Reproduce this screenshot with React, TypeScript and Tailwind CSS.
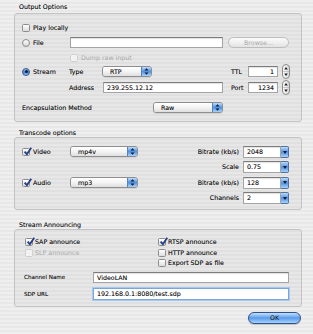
import React from 'react';

const txt = "text-[6.3px] leading-[8px] text-[#111] whitespace-nowrap [text-shadow:0_0_0.4px_rgba(0,0,0,0.45)]";

function Check({ checked, disabled }: { checked?: boolean; disabled?: boolean }) {
  return (
    <span
      className={`relative w-[8px] h-[8px] shrink-0 rounded-[1.5px] border ${
        disabled
          ? 'border-[#cfcfcf] bg-[#f2f2f2]'
          : 'border-[#8c8c8c] bg-gradient-to-b from-white to-[#dcdcdc]'
      }`}
    >
      {checked && (
        <svg className="absolute left-[0px] top-[-2px] w-[9px] h-[9px]" viewBox="0 0 10 10">
          <path d="M1.8 5.2 L4.3 8 L9.2 0.8" stroke="#243f8a" strokeWidth="2.1" fill="none" strokeLinejoin="round" />
        </svg>
      )}
    </span>
  );
}

function Radio({ on }: { on?: boolean }) {
  return on ? (
    <span className="w-[8px] h-[8px] shrink-0 rounded-full border border-[#35558f] bg-gradient-to-b from-[#9cc6f2] via-[#3e82db] to-[#8cc0f2] flex items-center justify-center">
      <span className="w-[3px] h-[3px] rounded-full bg-[#111a2e]" />
    </span>
  ) : (
    <span className="w-[8px] h-[8px] shrink-0 rounded-full border border-[#8c8c8c] bg-gradient-to-b from-white to-[#d8d8d8]" />
  );
}

function Field({ value, w, right, focus }: { value?: string; w: string; right?: boolean; focus?: boolean }) {
  return (
    <div
      className={`${w} h-full bg-white border ${
        focus
          ? 'border-[#7aa6dc] shadow-[0_0_0_1px_#a9c8ee]'
          : 'border-[#a4a4a4] border-t-[#7c7c7c] shadow-[inset_0_1px_1px_rgba(0,0,0,0.12)]'
      } flex items-center ${right ? 'justify-end pr-[3px]' : 'pl-[3px]'} ${txt}`}
    >
      {value}
    </div>
  );
}

function Arrows() {
  return (
    <svg width="5" height="7" viewBox="0 0 5 7">
      <path d="M2.5 0.3 L4.6 2.6 L0.4 2.6 Z" fill="#111a30" />
      <path d="M2.5 6.7 L4.6 4.4 L0.4 4.4 Z" fill="#111a30" />
    </svg>
  );
}

function Popup({ value, w }: { value: string; w: string }) {
  return (
    <div className={`${w} h-[11px] flex rounded-[3px] border border-[#8e8e8e] overflow-hidden shadow-[0_1px_0_rgba(0,0,0,0.08)]`}>
      <div className={`flex-1 bg-gradient-to-b from-white via-[#f4f4f4] to-[#dedede] pl-[7px] flex items-center ${txt}`}>
        {value}
      </div>
      <div className="w-[10px] border-l border-[#5b7fb8] bg-gradient-to-b from-[#b9dbfb] via-[#4f93e4] to-[#a5d2fb] flex items-center justify-center">
        <Arrows />
      </div>
    </div>
  );
}

function Combo({ value }: { value: string }) {
  return (
    <div className="w-[46px] h-[12px] flex">
      <div className={`flex-1 bg-white border border-[#a4a4a4] border-t-[#7c7c7c] shadow-[inset_0_1px_1px_rgba(0,0,0,0.12)] pl-[3px] flex items-center ${txt}`}>
        {value}
      </div>
      <div className="w-[8px] rounded-r-[2px] border border-l-0 border-[#55729f] bg-gradient-to-b from-[#b9dbfb] via-[#4f93e4] to-[#a5d2fb] flex items-center justify-center">
        <svg width="4" height="3" viewBox="0 0 4 3">
          <path d="M0 0 L4 0 L2 3 Z" fill="#111a30" />
        </svg>
      </div>
    </div>
  );
}

function Stepper() {
  return (
    <svg className="shrink-0 -my-[2px]" width="8" height="15" viewBox="0 0 8 15">
      <defs>
        <linearGradient id="stp" x1="0" y1="0" x2="1" y2="0">
          <stop offset="0" stopColor="#ffffff" />
          <stop offset="1" stopColor="#d6d6d6" />
        </linearGradient>
      </defs>
      <rect x="0.5" y="0.5" width="7" height="14" rx="3.5" fill="url(#stp)" stroke="#8a8a8a" />
      <line x1="1" y1="7.5" x2="7" y2="7.5" stroke="#b0b0b0" strokeWidth="0.6" />
      <path d="M4 3 L5.8 5.4 L2.2 5.4 Z" fill="#222" />
      <path d="M4 12 L5.8 9.6 L2.2 9.6 Z" fill="#222" />
    </svg>
  );
}

const box = "ml-[14px] w-[288px] rounded-[3px] border border-[#c3c3c3] bg-black/[0.03]";

export default function App() {
  return (
    <div className="w-[313px] h-[334px] overflow-hidden font-['DejaVu_Sans',sans-serif] bg-[repeating-linear-gradient(to_bottom,#efefef_0px,#efefef_2px,#e8e8e8_2px,#e8e8e8_4px)]">
      {/* Output Options */}
      <div className={`h-[13px] pt-[3px] pl-[19px] ${txt}`}>Output Options</div>
      <div className={`${box} h-[109px] pt-[9px] pl-[7px] flex flex-col`}>
        <div className="h-[10px] flex items-center gap-[3px]">
          <Check />
          <span className={txt}>Play locally</span>
        </div>
        <div className="h-[11px] mt-[4px] flex items-center">
          <div className="w-[48px] flex items-center gap-[3px]">
            <Radio />
            <span className={txt}>File</span>
          </div>
          <Field w="w-[153px]" />
          <div className="ml-[5px] w-[61px] h-[11px] rounded-full border border-[#bcbcbc] bg-gradient-to-b from-[#fbfbfb] via-[#f0f0f0] to-[#e2e2e2] flex items-center justify-center text-[6.3px] text-[#a6a6a6]">
            Browse...
          </div>
        </div>
        <div className="h-[10px] mt-[5px] flex items-center">
          <div className="w-[48px]" />
          <Check disabled />
          <span className="ml-[3px] text-[6.3px] leading-[8px] whitespace-nowrap text-[#a8a8a8]">Dump raw input</span>
        </div>
        <div className="h-[11px] mt-[3px] flex items-center">
          <div className="w-[47px] flex items-center gap-[3px]">
            <Radio on />
            <span className={txt}>Stream</span>
          </div>
          <span className={`w-[33px] ${txt}`}>Type</span>
          <Popup value="RTP" w="w-[50px]" />
          <div className="w-[79px]" />
          <span className={`w-[17px] ${txt}`}>TTL</span>
          <Field w="w-[30px]" value="1" right />
          <div className="w-[4px]" />
          <Stepper />
        </div>
        <div className="h-[11px] mt-[5px] flex items-center">
          <div className="w-[47px]" />
          <span className={`w-[34px] ${txt}`}>Address</span>
          <Field w="w-[120px]" value="239.255.12.12" />
          <div className="w-[8px]" />
          <span className={`w-[17px] ${txt}`}>Port</span>
          <Field w="w-[30px]" value="1234" right />
          <div className="w-[4px]" />
          <Stepper />
        </div>
        <div className="h-[11px] mt-[9px] flex items-center">
          <span className={`w-[131px] ${txt}`}>Encapsulation Method</span>
          <Popup value="Raw" w="w-[70px]" />
        </div>
      </div>

      {/* Transcode options */}
      <div className={`h-[15px] pt-[7px] pl-[19px] ${txt}`}>Transcode options</div>
      <div className={`${box} h-[73px] pt-[8px] pl-[7px] pr-[12px] flex`}>
        <div className="flex flex-col gap-[20px]">
          {[
            ['Video', 'mp4v'],
            ['Audio', 'mp3'],
          ].map(([label, v]) => (
            <div key={label} className="h-[11px] flex items-center">
              <div className="w-[48px] flex items-center gap-[3px]">
                <Check checked />
                <span className={txt}>{label}</span>
              </div>
              <Popup value={v} w="w-[68px]" />
            </div>
          ))}
        </div>
        <div className="ml-auto flex flex-col gap-[3.4px]">
          {[
            ['Bitrate (kb/s)', '2048'],
            ['Scale', '0.75'],
            ['Bitrate (kb/s)', '128'],
            ['Channels', '2'],
          ].map(([label, v], i) => (
            <div key={i} className="h-[12px] flex items-center justify-end gap-[4px]">
              <span className={txt}>{label}</span>
              <Combo value={v} />
            </div>
          ))}
        </div>
      </div>

      {/* Stream Announcing */}
      <div className={`h-[19px] pt-[11px] pl-[19px] ${txt}`}>Stream Announcing</div>
      <div className={`${box} h-[78px] pt-[7px] flex flex-col`}>
        <div className="flex pl-[10px]">
          <div className="w-[133px] flex flex-col">
            <div className="h-[10.5px] flex items-center gap-[2px]">
              <Check checked />
              <span className={txt}>SAP announce</span>
            </div>
            <div className="h-[10.5px] flex items-center gap-[2px]">
              <Check disabled />
              <span className="text-[6.3px] leading-[8px] whitespace-nowrap text-[#a8a8a8]">SLP announce</span>
            </div>
          </div>
          <div className="flex flex-col">
            <div className="h-[10.5px] flex items-center gap-[2px]">
              <Check checked />
              <span className={txt}>RTSP announce</span>
            </div>
            <div className="h-[10.5px] flex items-center gap-[2px]">
              <Check />
              <span className={txt}>HTTP announce</span>
            </div>
            <div className="h-[10.5px] flex items-center gap-[2px]">
              <Check />
              <span className={txt}>Export SDP as file</span>
            </div>
          </div>
        </div>
        <div className="h-[11px] mt-[3.5px] pl-[9px] flex items-center">
          <span className="w-[69px] text-[5.6px] text-[#111] whitespace-nowrap [text-shadow:0_0_0.4px_rgba(0,0,0,0.45)]">Channel Name</span>
          <Field w="w-[196px]" value="VideoLAN" />
        </div>
        <div className="h-[12px] mt-[5px] pl-[9px] flex items-center">
          <span className="w-[69px] text-[5.6px] text-[#111] whitespace-nowrap [text-shadow:0_0_0.4px_rgba(0,0,0,0.45)]">SDP URL</span>
          <Field w="w-[196px]" value="192.168.0.1:8080/test.sdp" focus />
        </div>
      </div>

      <div className="mt-[5px] pr-[12px] flex justify-end">
        <div className="w-[53px] h-[12px] rounded-full border border-[#2f4f8c] bg-gradient-to-b from-[#c4e1fc] via-[#5a9bea] to-[#a6d4fc] shadow-[0_1px_1px_rgba(0,0,0,0.2)] flex items-center justify-center text-[6.3px] text-[#111]">
          OK
        </div>
      </div>
    </div>
  );
}
